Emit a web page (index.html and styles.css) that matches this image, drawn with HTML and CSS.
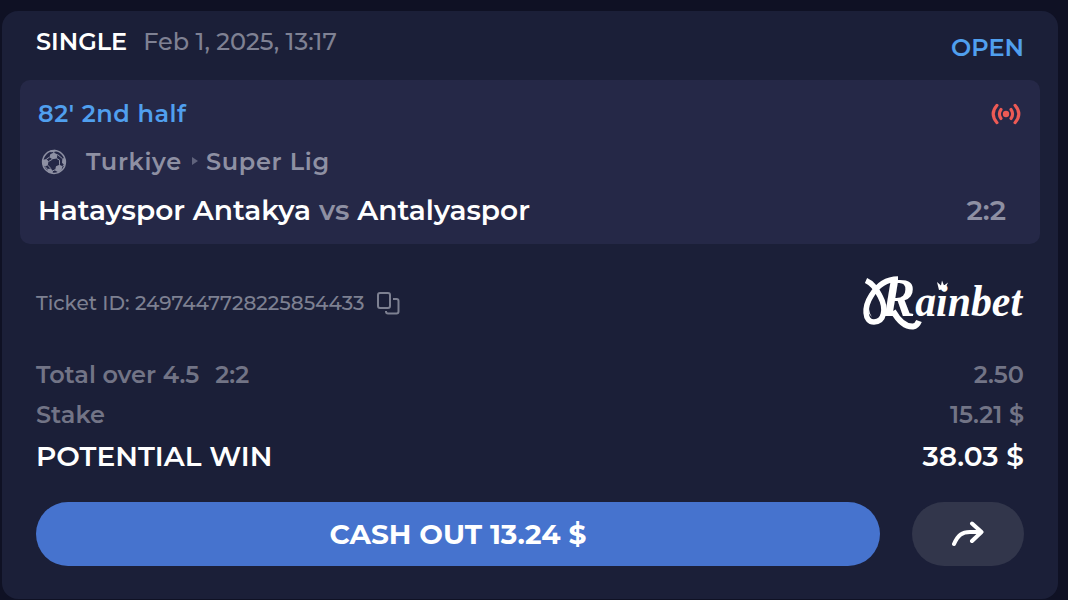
FILE: index.html
```html
<!DOCTYPE html>
<html lang="en">
<head>
<meta charset="utf-8">
<title>Bet ticket</title>
<link rel="stylesheet" href="styles.css">
</head>
<body>
<main class="ticket">
  <header class="head">
    <div class="head-left"><span class="single">SINGLE</span><span class="date">Feb 1, 2025, 13:17</span></div>
    <span class="open">OPEN</span>
  </header>
  <section class="event">
    <div class="row status">
      <span>82' 2nd half</span>
      <svg class="live" viewBox="0 0 30 22" fill="none" stroke="#ed5a55" stroke-width="3.1" stroke-linecap="round"><circle cx="15" cy="11" r="3.2" fill="#ed5a55" stroke="none"/><path d="M10 6.500Q6.800 11 10 15.500M20 6.500Q23.200 11 20 15.500M6 2.300Q-1.600 11 6 19.700M24 2.300Q31.600 11 24 19.700"/></svg>
    </div>
    <div class="row competition">
      <svg class="ball" viewBox="0 0 26 26"><circle cx="13" cy="13" r="11.400" fill="none" stroke="#8e90a3" stroke-width="1.500"/><path fill="#8e90a3" d="M9.300 5.300L12.800 3.500 16.500 5.500 15.800 9.500 11.300 10.300 8.500 8.200zM1.300 11L5.500 10 7.500 12.200 6.800 16.200 4 17.500 1.800 16zM15 17.300L18.500 15.800 21.500 17.200 20.500 21 17.200 23.300 14 21.500zM21.300 9.500L23.500 9 25 13.500 23.500 16.500 21 13.800zM6.200 20L9.800 19.500 12 22 11.500 24.500 7 23.300zM9 1.500L14 .8 16.500 1.500 12.800 3 9.500 3.200z"/><path d="M5.500 10L8.500 8.200M11.300 10.300L7.500 12.500M15.800 9.500L18.500 11.200V15.800M16.500 5.500L21.300 9.500M6.800 16.200L9.800 19.500M11.500 22L14.500 20.500M21.500 17.200L23 16M4 17.500L6.200 20M12.800 2V4" stroke="#8e90a3" fill="none"/></svg>
      <span>Turkiye</span><span class="arrow"></span><span>Super Lig</span>
    </div>
    <div class="row match">
      <div class="teams"><span>Hatayspor Antakya</span><span class="vs">vs</span><span>Antalyaspor</span></div>
      <span class="score">2:2</span>
    </div>
  </section>
  <section class="idrow">
    <div class="idleft"><span>Ticket ID: 2497447728225854433</span>
    <svg class="copy" viewBox="0 0 24 24" fill="none" stroke="#7d8091" stroke-width="2"><rect x="2" y="2" width="12" height="15" rx="2"/><path d="M17 8H20.500q2 0 2 2v10.500q0 2-2 2H12q-2 0-2-2V20"/></svg></div>
    <svg class="logo" viewBox="0 0 162 58" role="img" aria-label="Rainbet">
      <path d="M4 6.500Q12 10 18 22C25 35 22 48 12 48C2 48 2 33 9 22C15 12 24 5 36 5" fill="none" stroke="#fff" stroke-width="5.500"/>
      <path d="M7 33q-2 6 3 10q-3-4-3-10" fill="#fff"/>
      <path d="M31 37C35 44 41 53 51 52.500Q55 52 57 47" fill="none" stroke="#fff" stroke-width="6"/>
      <path d="M75 8l4 3.500 1-5 2 5 4-3-3 6.500-6 1z" fill="#fff"/>
      <text class="logo-word" x="19" y="42" textLength="141" lengthAdjust="spacingAndGlyphs"><tspan class="logo-r">R</tspan>ainbet</text>
    </svg>
  </section>
  <section class="lines">
    <div class="line"><div><span>Total over 4.5</span><span class="result">2:2</span></div><span>2.50</span></div>
    <div class="line"><span>Stake</span><span>15.21 $</span></div>
    <div class="line win"><span>POTENTIAL WIN</span><span>38.03 $</span></div>
  </section>
  <div class="actions">
    <button class="cash">CASH OUT 13.24 $</button>
    <button class="share" aria-label="Share"><svg class="shareicon" viewBox="0 0 34 26" fill="none" stroke="#fff" stroke-width="4" stroke-linecap="round" stroke-linejoin="round"><path d="M3 23C7 14 11 11 19 11H30M21 2.500L30.500 11L21 20"/></svg></button>
  </div>
</main>
</body>
</html>
```
FILE: styles.css
```css
* { box-sizing: border-box; }
body { margin: 0; height: 600px; padding: 11px 10px 0 2px; background: #0f1124; font-family: Montserrat, Inter, "Noto Sans", sans-serif; font-weight: 500; overflow: hidden; }
.ticket { height: 588px; padding: 0 18px; border-radius: 16px; background: #1b1f38; color: #fff; white-space: nowrap; }
.head { height: 69px; padding: 15px 16px 0; display: flex; justify-content: space-between; font-size: 24px; line-height: 32px; }
.head-left { display: flex; gap: 16px; }
.single { font-weight: 600; }
.date { color: #7f8193; }
.open { padding-top: 6px; color: #509fee; font-weight: 600; }
.event { height: 164px; padding: 0 18px; border-radius: 10px; background: #252847; font-weight: 600; }
.row { display: flex; align-items: center; }
.status { height: 67px; justify-content: space-between; font-size: 24px; letter-spacing: .55px; color: #509fee; }
.live { width: 30px; height: 22px; margin: 1px 1px 0 0; }
.competition { height: 28px; font-size: 24px; letter-spacing: .7px; color: #8e90a3; }
.ball { width: 26px; height: 26px; margin: 1px 19px 0 3px; }
.arrow { margin: 0 8px 0 10px; border: 4px solid transparent; border-left: 6px solid #60637c; border-right: 0; }
.match { height: 70px; justify-content: space-between; padding-right: 16px; font-size: 28px; }
.teams { display: flex; gap: 8px; }
.vs, .score { color: #8e90a3; }
.idrow { height: 109px; margin-top: 4px; padding: 0 16px; display: flex; align-items: center; justify-content: space-between; font-size: 20px; color: #7d8091; }
.idleft { display: flex; align-items: center; gap: 12px; }
.copy { width: 24px; height: 24px; }
.logo { width: 162px; height: 58px; overflow: visible; }
.logo text { fill: #fff; font-family: "Liberation Serif", serif; font-style: italic; font-weight: 700; }
.logo .logo-r { font-size: 54px; }
.logo .logo-word { font-size: 44px; }
.lines { margin-top: -3px; padding: 0 16px; font-size: 24px; color: #727486; font-weight: 600; height: 134px; }
.line { height: 40px; display: flex; align-items: center; justify-content: space-between; }
.result { margin-left: 16px; }
.win { font-size: 28px; color: #fff; height: 44px; }
.actions { padding: 14px 16px 0; display: flex; gap: 32px; }
button { height: 64px; border: 0; border-radius: 32px; color: #fff; font: inherit; padding: 0; display: flex; align-items: center; justify-content: center; }
.cash { flex: 1; background: #4673ce; font-size: 28px; font-weight: 700; }
.share { width: 112px; background: #32364b; }
.shareicon { width: 34px; height: 26px; }
```
